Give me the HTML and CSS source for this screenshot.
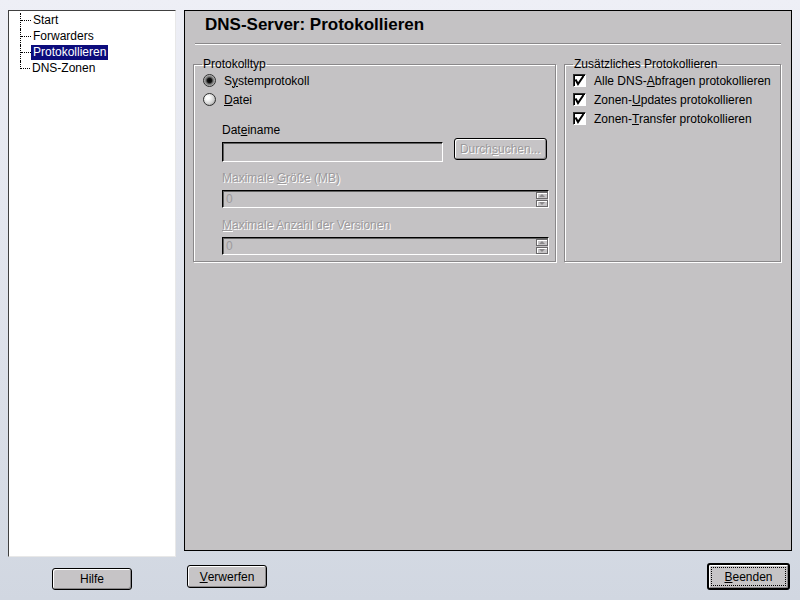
FILE: index.html
```html
<!DOCTYPE html>
<html lang="de">
<head>
  <meta charset="UTF-8" />
  <title>DNS-Server: Protokollieren</title>
  <link rel="stylesheet" href="styles.css">
</head>
<body>
<div class="window">

  <div class="content">
    <!-- Baum links -->
    <div class="sidebar">
      <ul class="tree">
        <li><span class="branch"></span><span class="label">Start</span></li>
        <li><span class="branch"></span><span class="label">Forwarders</span></li>
        <li><span class="branch"></span><span class="label selected">Protokollieren</span></li>
        <li><span class="branch"></span><span class="label">DNS-Zonen</span></li>
      </ul>
    </div>

    <!-- Hauptbereich -->
    <div class="main">
      <h1 class="title">DNS-Server: Protokollieren</h1>
      <div class="separator"></div>

      <div class="groups">
        <fieldset class="group group-type">
          <legend>Protokolltyp</legend>
          <div class="row">
            <span class="radio checked"></span>
            <span>S<u>y</u>stemprotokoll</span>
          </div>
          <div class="row">
            <span class="radio"></span>
            <span><u>D</u>atei</span>
          </div>

          <div class="file-opts">
            <div class="field-label">Dat<u>e</u>iname</div>
            <div class="file-row">
              <div class="input file-input"></div>
              <div class="button browse disabled">Durch<u>s</u>uchen...</div>
            </div>

            <div class="field-label disabled">Maximale <u>G</u>röße (MB)</div>
            <div class="input spin">
              <span class="spin-value">0</span>
              <span class="spin-buttons">
                <span class="spin-btn up"></span>
                <span class="spin-btn down"></span>
              </span>
            </div>

            <div class="field-label disabled label-versions"><u>M</u>aximale Anzahl der Versionen</div>
            <div class="input spin">
              <span class="spin-value">0</span>
              <span class="spin-buttons">
                <span class="spin-btn up"></span>
                <span class="spin-btn down"></span>
              </span>
            </div>
          </div>
        </fieldset>

        <fieldset class="group group-extra">
          <legend>Zusätzliches Protokollieren</legend>
          <div class="row">
            <span class="check"><svg width="11" height="11" viewBox="0 0 11 11"><path d="M1.5 4.5 L4 9 L9.5 1" fill="none" stroke="#000" stroke-width="2"/></svg></span>
            <span>Alle DNS-<u>A</u>bfragen protokollieren</span>
          </div>
          <div class="row">
            <span class="check"><svg width="11" height="11" viewBox="0 0 11 11"><path d="M1.5 4.5 L4 9 L9.5 1" fill="none" stroke="#000" stroke-width="2"/></svg></span>
            <span>Zonen-<u>U</u>pdates protokollieren</span>
          </div>
          <div class="row">
            <span class="check"><svg width="11" height="11" viewBox="0 0 11 11"><path d="M1.5 4.5 L4 9 L9.5 1" fill="none" stroke="#000" stroke-width="2"/></svg></span>
            <span>Zonen-<u>T</u>ransfer protokollieren</span>
          </div>
        </fieldset>
      </div>
    </div>
  </div>

  <!-- Knöpfe unten -->
  <div class="footer">
    <div class="footer-left">
      <div class="button btn-help">Hilfe</div>
    </div>
    <div class="footer-main">
      <div class="button btn-reset"><u>V</u>erwerfen</div>
      <div class="button btn-finish"><span class="focus"><u>B</u>eenden</span></div>
    </div>
  </div>

</div>
</body>
</html>
```

FILE: styles.css
```css
body {
  margin: 0;
  width: 800px;
  height: 600px;
  overflow: hidden;
  background: linear-gradient(#eeeff6, #d1d7e1);
  font-family: "Liberation Sans", Arial, sans-serif;
  font-size: 12px;
  color: #000;
}
.window {
  display: flex;
  flex-direction: column;
  height: 600px;
  padding: 10px 8px 0 8px;
  box-sizing: border-box;
}
.content {
  display: flex;
  gap: 8px;
  height: 547px;
}

/* Baum */
.sidebar {
  width: 168px;
  height: 547px;
  box-sizing: border-box;
  background: #fff;
  border: 1px solid;
  border-color: #404040 #e8e8e8 #e8e8e8 #404040;
}
.tree {
  list-style: none;
  margin: 2px 0 0 11px;
  padding: 0;
}
.tree li {
  display: flex;
  height: 16px;
  line-height: 15px;
  border-left: 1px dotted #000;
}
.tree li:last-child {
  border-left: none;
}
.branch {
  width: 10px;
  height: 7px;
  flex: none;
  border-bottom: 1px dotted #000;
}
.tree li:last-child .branch {
  width: 9px;
  border-left: 1px dotted #000;
}
.label {
  padding: 0 2px;
  height: 15px;
}
.selected {
  background: #0c0c7c;
  color: #fff;
}

/* Hauptbereich */
.main {
  width: 608px;
  height: 541px;
  box-sizing: border-box;
  background: #c4c2c4;
  border: 1px solid #000;
}
.title {
  margin: 0;
  padding: 4px 0 0 20px;
  font-size: 17px;
  line-height: 20px;
  font-weight: bold;
}
.separator {
  margin: 8px 10px 0 10px;
  height: 1px;
  background: #8a888a;
  border-bottom: 1px solid #fff;
}
.groups {
  display: flex;
  gap: 8px;
  margin: 13px 0 0 8px;
}
.group {
  margin: 0;
  padding: 0 8px 6px 8px;
  border: 1px solid #8a888a;
  box-shadow: inset 1px 1px 0 #fff, 1px 1px 0 #fff;
  min-width: 0;
}
.group legend {
  padding: 0 1px;
  line-height: 13px;
}
.group-type {
  width: 363px;
  box-sizing: border-box;
}
.group-extra {
  width: 217px;
  box-sizing: border-box;
}
.row {
  display: flex;
  align-items: center;
  height: 19px;
  white-space: nowrap;
}
.radio {
  width: 13px;
  height: 13px;
  margin: 0 8px 0 1px;
  border-radius: 50%;
  border: 1px solid #303030;
  background: radial-gradient(circle at 35% 35%, #fff 15%, #d0d0d0 60%, #7a7a7a 100%);
  box-sizing: border-box;
  flex: none;
}
.radio.checked {
  background: radial-gradient(circle at 50% 50%, #000 0, #101010 28%, #6a6a6a 45%, #b8b8b8 70%, #e8e8e8 100%);
}
.check {
  width: 13px;
  height: 13px;
  margin: 0 8px 0 0;
  box-sizing: border-box;
  border: 1px solid;
  border-color: #303030 #fff #fff #303030;
  box-shadow: inset 1px 1px 0 #000;
  background: #fff;
  flex: none;
  display: flex;
  align-items: center;
  justify-content: center;
}

/* Datei-Optionen */
.file-opts {
  margin: 14px 0 0 20px;
}
.field-label {
  line-height: 14px;
}
.disabled {
  color: #9c9a9c;
  text-shadow: 1px 1px 0 #fff;
}
.disabled u {
  text-decoration-color: #9c9a9c;
}
.file-row {
  display: flex;
  align-items: flex-start;
  gap: 11px;
  margin-bottom: 9px;
}
.input {
  box-sizing: border-box;
  border: 1px solid;
  border-color: #000 #fff #fff #000;
  box-shadow: inset 1px 1px 0 #606060;
  background: #c4c2c4;
}
.file-input {
  width: 222px;
  height: 20px;
  margin-top: 5px;
}
.button {
  box-sizing: border-box;
  display: flex;
  align-items: center;
  justify-content: center;
  background: #c6c4c6;
  border: 1px solid #000;
  border-radius: 3px;
  box-shadow: inset 1px 1px 0 #fff, inset -1px -1px 0 #8a888a;
}
.browse {
  width: 94px;
  height: 22px;
  margin-top: 1px;
}
.spin {
  display: flex;
  align-items: center;
  justify-content: space-between;
  width: 327px;
  height: 18px;
  margin: 5px 0 0 0;
  padding-left: 3px;
}
.label-versions {
  margin-top: 10px;
}
.spin-value {
  color: #9c9a9c;
}
.spin-buttons {
  display: flex;
  flex-direction: column;
  gap: 1px;
}
.spin-btn {
  width: 12px;
  height: 7px;
  box-sizing: border-box;
  background: #c6c4c6;
  border: 1px solid #6a686a;
  box-shadow: inset 1px 1px 0 #fff;
  display: flex;
  align-items: center;
  justify-content: center;
}
.spin-btn::after {
  content: "";
  border-left: 3px solid transparent;
  border-right: 3px solid transparent;
}
.spin-btn.up::after {
  border-bottom: 3px solid #8a888a;
}
.spin-btn.down::after {
  border-top: 3px solid #8a888a;
}

/* Fußleiste */
.footer {
  display: flex;
  gap: 8px;
}
.footer-left {
  width: 168px;
  display: flex;
  justify-content: center;
  padding-top: 11px;
}
.footer-main {
  width: 608px;
  display: flex;
  justify-content: space-between;
  align-items: flex-start;
  padding: 0 2px 0 3px;
  box-sizing: border-box;
}
.btn-help {
  width: 80px;
  height: 22px;
}
.btn-reset {
  width: 80px;
  height: 23px;
  margin-top: 8px;
}
.btn-finish {
  width: 83px;
  height: 27px;
  margin-top: 6px;
  border-width: 2px;
  padding: 2px;
}
.focus {
  flex: 1;
  align-self: stretch;
  display: flex;
  align-items: center;
  justify-content: center;
  border: 1px dotted #000;
}
```
